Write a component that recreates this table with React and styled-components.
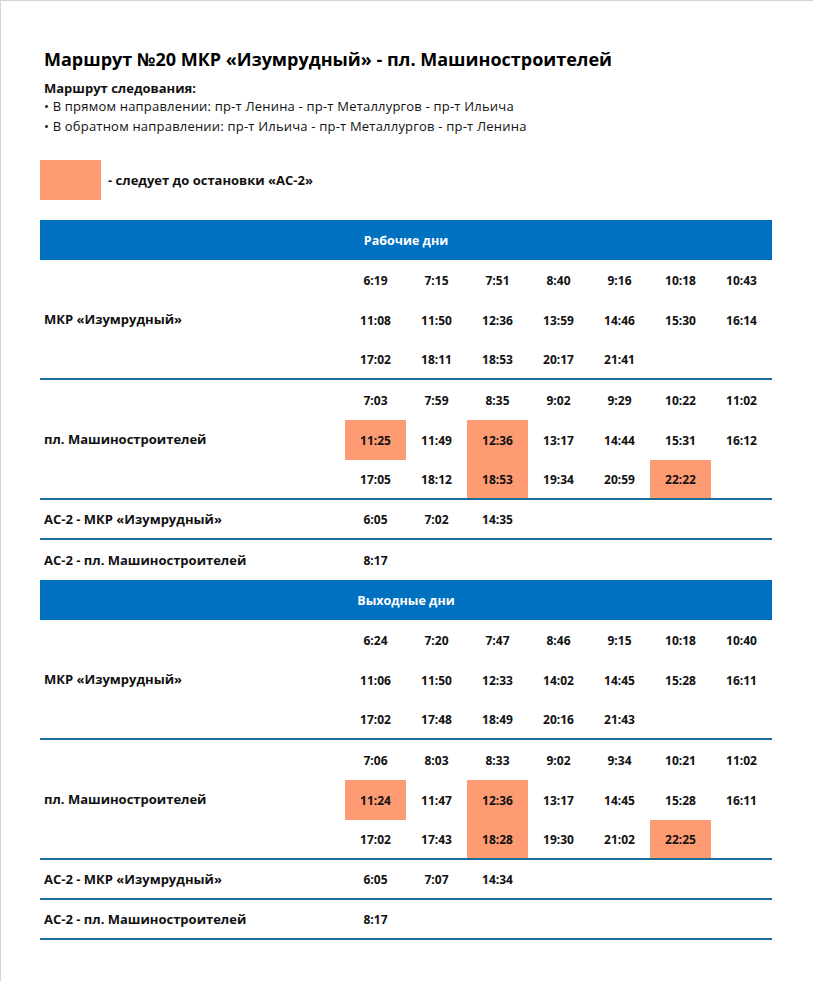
import React from "react";
import styled, { createGlobalStyle } from "styled-components";

const Global = createGlobalStyle`
  html, body { margin: 0; padding: 0; background: #fff; }
  body { font-family: "Open Sans", "DejaVu Sans", sans-serif; color: #111; }
`;

const Page = styled.div`
  width: 813px;
  min-height: 981px;
  box-sizing: border-box;
  border-top: 1px solid #d4d4d4;
  border-left: 1px solid #d4d4d4;
  padding: 42px 41px 40px 39px;
`;

const Title = styled.h1`
  margin: 0 0 5px 4px;
  font-size: 18px;
  line-height: 32px;
  font-weight: 700;
  color: #000;
`;

const RouteInfo = styled.div`
  margin-left: 4px;
  font-size: 13px;
  letter-spacing: 0.2px;
  line-height: 20px;
`;

const RouteHead = styled.div`
  font-weight: 700;
  letter-spacing: 0;
  line-height: 16px;
`;

const Legend = styled.div`
  display: flex;
  align-items: center;
  gap: 7px;
  margin-top: 24px;
  margin-bottom: 20px;
`;

const Swatch = styled.div`
  width: 61px;
  height: 40px;
  background: #ff9b73;
`;

const LegendText = styled.span`
  font-size: 13px;
  font-weight: 700;
`;

const Header = styled.div`
  height: 40px;
  background: #0070c0;
  color: #fff;
  display: flex;
  align-items: center;
  justify-content: center;
  font-size: 12.5px;
  font-weight: 700;
`;

const Section = styled.div`
  display: grid;
  grid-template-columns: 305px repeat(7, 61px);
  grid-template-rows: ${(p) => p.$rows};
  border-bottom: ${(p) => (p.$line ? "2px solid #1c6c9c" : "none")};
`;

const Label = styled.div`
  grid-column: 1;
  grid-row: 1 / -1;
  display: flex;
  align-items: center;
  padding-left: 4px;
  font-size: 13px;
  font-weight: 700;
`;

const Time = styled.div`
  display: flex;
  align-items: center;
  justify-content: center;
  font-size: 12px;
  font-weight: 700;
  background: ${(p) => (p.$hl ? "#ff9b73" : "transparent")};
`;

const rowsFor = (n, line) => {
  const r = Array(n).fill("40px");
  if (line) r[n - 1] = "38px";
  return r.join(" ");
};

function Block({ label, rows, hl = [], line = true }) {
  return (
    <Section $rows={rowsFor(rows.length, line)} $line={line}>
      <Label>{label}</Label>
      {rows.map((row, ri) =>
        row.map((t, ci) => (
          <Time
            key={ri + "-" + ci}
            $hl={hl.includes(`${ri}-${ci}`)}
            style={{ gridRow: ri + 1, gridColumn: ci + 2 }}
          >
            {t}
          </Time>
        ))
      )}
    </Section>
  );
}

export default function App() {
  return (
    <>
      <Global />
      <Page>
        <Title>Маршрут №20 МКР «Изумрудный» - пл. Машиностроителей</Title>
        <RouteInfo>
          <RouteHead>Маршрут следования:</RouteHead>
          <div>• В прямом направлении: пр-т Ленина - пр-т Металлургов - пр-т Ильича</div>
          <div>• В обратном направлении: пр-т Ильича - пр-т Металлургов - пр-т Ленина</div>
        </RouteInfo>
        <Legend>
          <Swatch />
          <LegendText>- следует до остановки «АС-2»</LegendText>
        </Legend>

        <Header>Рабочие дни</Header>
        <Block
          label="МКР «Изумрудный»"
          rows={[
            ["6:19", "7:15", "7:51", "8:40", "9:16", "10:18", "10:43"],
            ["11:08", "11:50", "12:36", "13:59", "14:46", "15:30", "16:14"],
            ["17:02", "18:11", "18:53", "20:17", "21:41"],
          ]}
        />
        <Block
          label="пл. Машиностроителей"
          rows={[
            ["7:03", "7:59", "8:35", "9:02", "9:29", "10:22", "11:02"],
            ["11:25", "11:49", "12:36", "13:17", "14:44", "15:31", "16:12"],
            ["17:05", "18:12", "18:53", "19:34", "20:59", "22:22"],
          ]}
          hl={["1-0", "1-2", "2-2", "2-5"]}
        />
        <Block label="АС-2 - МКР «Изумрудный»" rows={[["6:05", "7:02", "14:35"]]} />
        <Block label="АС-2 - пл. Машиностроителей" rows={[["8:17"]]} line={false} />

        <Header>Выходные дни</Header>
        <Block
          label="МКР «Изумрудный»"
          rows={[
            ["6:24", "7:20", "7:47", "8:46", "9:15", "10:18", "10:40"],
            ["11:06", "11:50", "12:33", "14:02", "14:45", "15:28", "16:11"],
            ["17:02", "17:48", "18:49", "20:16", "21:43"],
          ]}
        />
        <Block
          label="пл. Машиностроителей"
          rows={[
            ["7:06", "8:03", "8:33", "9:02", "9:34", "10:21", "11:02"],
            ["11:24", "11:47", "12:36", "13:17", "14:45", "15:28", "16:11"],
            ["17:02", "17:43", "18:28", "19:30", "21:02", "22:25"],
          ]}
          hl={["1-0", "1-2", "2-2", "2-5"]}
        />
        <Block label="АС-2 - МКР «Изумрудный»" rows={[["6:05", "7:07", "14:34"]]} />
        <Block label="АС-2 - пл. Машиностроителей" rows={[["8:17"]]} />
      </Page>
    </>
  );
}
